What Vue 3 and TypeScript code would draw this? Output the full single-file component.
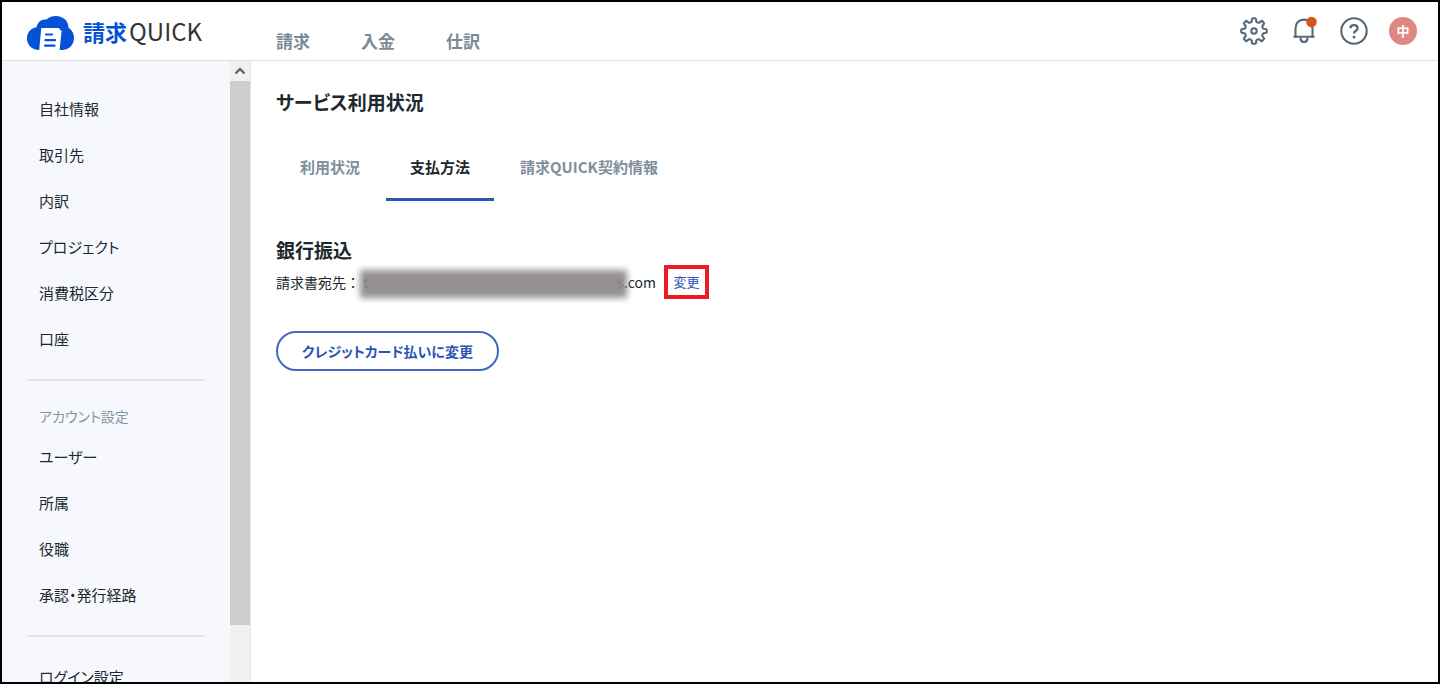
<script setup lang="ts">
import { ref } from 'vue'

const nav: string[] = ['請求', '入金', '仕訳']

const companyLinks: string[] = ['自社情報', '取引先', '内訳', 'プロジェクト', '消費税区分', '口座']
const accountLinks: string[] = ['ユーザー', '所属', '役職', '承認・発行経路']

const tabs: string[] = ['利用状況', '支払方法', '請求QUICK契約情報']
const activeTab = ref(1)

// Outline of an eight-toothed gear centred on the origin.
function gearPath(outer: number, inner: number): string {
  const at = (r: number, deg: number): string => {
    const a = ((deg - 90) * Math.PI) / 180
    return `${(r * Math.cos(a)).toFixed(2)} ${(r * Math.sin(a)).toFixed(2)}`
  }
  let d = `M${at(inner, -13)}`
  for (let i = 0; i < 8; i++) {
    const c = i * 45
    d += `L${at(outer - 1, c - 10)}Q${at(outer, c - 9)} ${at(outer, c - 5)}L${at(outer, c + 5)}`
    d += `Q${at(outer, c + 9)} ${at(outer - 1, c + 10)}L${at(inner, c + 13)}`
    d += `Q${at(inner - 1.2, c + 22.5)} ${at(inner, c + 32)}`
  }
  return d + 'Z'
}
const gear = gearPath(12.8, 9.8)
</script>

<template>
  <div class="app">
    <header class="header">
      <a href="#" class="logo" aria-label="請求QUICK">
        <svg class="logo-mark" width="47" height="34" viewBox="0 0 47 34" aria-hidden="true">
          <path
            fill="#0552d6"
            d="M12 34C5 34 0 29 0 22.500C0 16.500 4 12 9.500 11.300C10.500 6 15 2.500 19.500 3.600C22 1 25.500 0 29 0C36 0 41.500 5 41.500 11.800C44.800 13.700 47 17.500 47 22C47 28.500 42.500 33.500 36 34Z"
          />
          <path fill="#fff" d="M14.300 12H31.800L34.600 15.200L32.600 34H12.200Z" />
          <path
            stroke="#0552d6"
            stroke-width="2.200"
            stroke-linecap="round"
            d="M19 18.500H25M18.500 24.200H28M18 29.700H27.500"
          />
        </svg>
        <span class="logo-text"><span class="logo-kanji">請求</span>QUICK</span>
      </a>
      <nav class="nav">
        <a v-for="item in nav" :key="item" href="#">{{ item }}</a>
      </nav>
      <div class="tools">
        <button type="button" aria-label="設定">
          <svg width="30" height="30" viewBox="-15 -15 30 30">
            <g fill="none" stroke="#54687a" stroke-width="2.100" stroke-linejoin="round">
              <path :d="gear" />
              <circle r="2.700" />
            </g>
          </svg>
        </button>
        <button type="button" aria-label="通知">
          <svg width="30" height="30" viewBox="0 0 30 30">
            <g fill="none" stroke="#54687a" stroke-width="2.100" stroke-linecap="round" stroke-linejoin="round">
              <path d="M6.500 20.500V12.500C6.500 7 9.800 3.600 15 3.600S23.500 7 23.500 12.500V20.500" />
              <path d="M5.300 20.800H24.700" />
              <path d="M11.500 22.500C11.800 24.800 13.200 26 15 26S18.200 24.800 18.500 22.500" />
            </g>
            <circle cx="22.500" cy="6" r="5.300" fill="#d4541a" />
          </svg>
        </button>
        <button type="button" aria-label="ヘルプ">
          <svg width="30" height="30" viewBox="0 0 30 30">
            <circle cx="15" cy="15" r="12.700" fill="none" stroke="#54687a" stroke-width="2.100" />
            <path
              d="M11.400 12.300C11.500 10.200 12.900 9.200 15 9.200C17.100 9.200 18.600 10.400 18.600 12.200C18.600 14.900 15 14.700 15 17.600"
              fill="none"
              stroke="#54687a"
              stroke-width="2.300"
            />
            <circle cx="15" cy="20.900" r="1.500" fill="#54687a" />
          </svg>
        </button>
        <button type="button" class="avatar">中</button>
      </div>
    </header>

    <div class="body">
      <aside class="sidebar">
        <nav class="menu">
          <a v-for="item in companyLinks" :key="item" href="#">{{ item }}</a>
          <hr />
          <h2>アカウント設定</h2>
          <a v-for="item in accountLinks" :key="item" href="#">{{ item }}</a>
          <hr />
          <a href="#">ログイン設定</a>
        </nav>
        <div class="scrollbar" aria-hidden="true">
          <div class="scroll-arrow">
            <svg width="12" height="8" viewBox="0 0 12 8">
              <path d="M1.500 6.500L6 2L10.500 6.500" fill="none" stroke="#5c5c5c" stroke-width="2.200" />
            </svg>
          </div>
          <div class="scroll-track"><div class="scroll-thumb"></div></div>
        </div>
      </aside>

      <main class="main">
        <h1>サービス利用状況</h1>
        <div class="tabs" role="tablist">
          <button
            v-for="(tab, i) in tabs"
            :key="tab"
            type="button"
            role="tab"
            :aria-selected="i === activeTab"
            :class="{ active: i === activeTab }"
            @click="activeTab = i"
          >
            {{ tab }}
          </button>
        </div>
        <section>
          <h2>銀行振込</h2>
          <div class="address">
            <span class="address-label">請求書宛先：</span>
            <span class="masked"><span>t</span><span>s</span></span>
            <span>.com</span>
            <span class="callout"><a href="#">変更</a></span>
          </div>
          <button type="button" class="outline-button">クレジットカード払いに変更</button>
        </section>
      </main>
    </div>
  </div>
</template>

<style>
body {
  margin: 0;
}
</style>

<style scoped>
.app {
  box-sizing: border-box;
  display: flex;
  flex-direction: column;
  height: 100vh;
  overflow: hidden;
  border: 2px solid #000;
  background: #fff;
  color: #20282e;
  font-family: 'Noto Sans CJK JP', sans-serif;
  font-size: 15px;
  font-feature-settings: 'palt';
}
a {
  color: inherit;
  text-decoration: none;
}
button {
  padding: 0;
  border: 0;
  background: none;
  color: inherit;
  font: inherit;
  font-feature-settings: inherit;
  cursor: pointer;
}
h1,
h2 {
  margin: 0;
}
.header {
  display: flex;
  flex: none;
  align-items: center;
  height: 58px;
  padding: 0 21px 0 25px;
  border-bottom: 1px solid #dfe0ea;
}
.logo {
  display: flex;
  align-items: center;
  gap: 9px;
  width: 249px;
}
.logo-mark {
  margin-top: 4px;
}
.logo-text {
  display: flex;
  align-items: center;
  gap: 2px;
  color: #333;
  font-size: 24px;
  line-height: 40px;
}
.logo-kanji {
  color: #0552d6;
  font-size: 22px;
  font-weight: 700;
}
.nav {
  display: flex;
  gap: 51px;
  padding-top: 20px;
  color: #7b8a99;
  font-size: 17px;
  font-weight: 700;
  line-height: 24px;
}
.tools {
  display: flex;
  align-items: center;
  gap: 20px;
  margin-left: auto;
}
.tools svg {
  display: block;
}
.avatar {
  width: 28px;
  height: 28px;
  border-radius: 50%;
  background: #de8881;
  color: #fff;
  font-size: 13px;
  font-weight: 700;
  line-height: 28px;
}
.body {
  display: flex;
  flex: 1;
  min-height: 0;
}
.sidebar {
  display: flex;
  flex: none;
  width: 248px;
  border-right: 1px solid #e6e6ee;
  background: #f7f8fd;
}
.menu {
  flex: 1;
  overflow: hidden;
  padding: 25px 25px 0;
}
.menu a {
  display: block;
  padding-left: 12px;
  line-height: 46px;
}
.menu hr {
  height: 2px;
  margin: 17px 0;
  border: 0;
  background: #e4e6ea;
}
.menu h2 {
  padding-left: 12px;
  color: #8494a3;
  font-size: 14px;
  font-weight: 400;
  line-height: 36px;
}
.scrollbar {
  display: flex;
  flex-direction: column;
  width: 20px;
  background: #f0f0f0;
}
.scroll-arrow {
  display: flex;
  align-items: center;
  justify-content: center;
  height: 20px;
}
.scroll-track {
  flex: 1;
}
.scroll-thumb {
  height: 90.5%;
  background: #cdcdcd;
}
.main {
  flex: 1;
  padding: 26px 25px;
}
h1 {
  font-size: 19px;
  line-height: 30px;
}
.tabs {
  display: flex;
  gap: 2px;
  margin-top: 18px;
}
.tabs button {
  padding: 20px 24px 19px;
  border-bottom: 3px solid transparent;
  color: #7f8e9c;
  font-weight: 700;
  line-height: 24px;
}
.tabs .active {
  border-color: #2a55b5;
  color: #20282e;
}
.main h2 {
  margin-top: 35px;
  font-size: 19px;
  line-height: 28px;
}
.address {
  display: flex;
  align-items: center;
  margin-top: 1px;
  font-size: 14px;
}
.address-label {
  font-feature-settings: normal;
}
.masked {
  position: relative;
  display: flex;
  justify-content: space-between;
  box-sizing: border-box;
  width: 264px;
  padding-left: 3px;
  color: #878382;
  line-height: 28px;
}
.masked::before {
  position: absolute;
  inset: 2px -3px -2px 0;
  background: #94908f;
  content: '';
  filter: blur(3px);
}
.masked span {
  position: relative;
}
.callout {
  box-sizing: border-box;
  width: 45px;
  margin-left: 8px;
  border: 4px solid #ed1c24;
  color: #2a55b5;
  font-size: 13px;
  line-height: 26px;
  text-align: center;
}
.outline-button {
  margin-top: 32px;
  padding: 0 24px;
  border: 2px solid #4168bd;
  border-radius: 20px;
  color: #2a55b5;
  font-size: 14px;
  font-weight: 700;
  line-height: 36px;
}
</style>
